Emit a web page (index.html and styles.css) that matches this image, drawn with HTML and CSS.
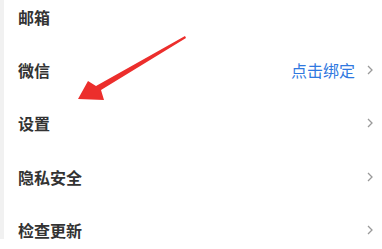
FILE: index.html
```html
<!DOCTYPE html>
<html lang="zh-CN">
<head>
  <meta charset="UTF-8" />
  <meta name="viewport" content="width=device-width, initial-scale=1.0" />
  <title>设置</title>
  <link rel="stylesheet" href="styles.css">
</head>
<body>
  <div class="page">
    <ul class="menu">
      <li class="row"><span class="label">邮箱</span></li>
      <li class="row">
        <span class="label">微信</span>
        <span class="extra">点击绑定</span>
        <svg class="chev" viewBox="0 0 6 10"><polyline points="1,1 5,5 1,9" /></svg>
      </li>
      <li class="row">
        <span class="label">设置</span>
        <svg class="chev" viewBox="0 0 6 10"><polyline points="1,1 5,5 1,9" /></svg>
      </li>
      <li class="row">
        <span class="label">隐私安全</span>
        <svg class="chev" viewBox="0 0 6 10"><polyline points="1,1 5,5 1,9" /></svg>
      </li>
      <li class="row">
        <span class="label">检查更新</span>
        <svg class="chev" viewBox="0 0 6 10"><polyline points="1,1 5,5 1,9" /></svg>
      </li>
    </ul>

    <!-- annotation arrow drawn over the list -->
    <svg class="arrow" viewBox="0 0 382 249">
      <path d="M185 46 L186 48 L101 100 L104 110 L78 109 L88 91 L96 96 Z" />
    </svg>
  </div>
</body>
</html>
```

FILE: styles.css
```css
:root {
  --text-color: #333333;
  --link-color: #2f78e0;
  --chev-color: #9a9a9a;
  --edge-color: #f1f1f1;
  --arrow-color: #ec2e2c;
}

* {
  margin: 0;
  padding: 0;
  box-sizing: border-box;
}

html, body {
  width: 100%;
  height: 100%;
  background: #ffffff;
  overflow: hidden;
  font-family: "Noto Sans CJK SC", "Noto Sans", sans-serif;
}

.page {
  position: relative;
  height: 100%;
  border-left: 4px solid var(--edge-color);
}

.menu {
  list-style: none;
  margin-top: -10px;
}

.row {
  display: flex;
  align-items: center;
  height: 53.3px;
  padding: 0 9px 0 14px;
}

.label {
  flex: 1;
  font-size: 16px;
  font-weight: 700;
  color: var(--text-color);
}

.extra {
  font-size: 16px;
  color: var(--link-color);
  margin-right: 12px;
}

.chev {
  width: 6px;
  height: 10px;
  fill: none;
  stroke: var(--chev-color);
  stroke-width: 1.3;
}

.arrow {
  position: absolute;
  left: -4px;
  top: 0;
  width: 382px;
  height: 249px;
  fill: var(--arrow-color);
  pointer-events: none;
}
```
